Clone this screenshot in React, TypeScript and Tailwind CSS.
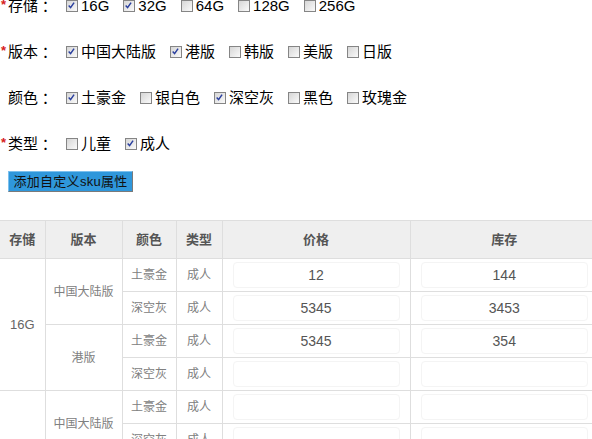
import React from "react";

type Opt = { label: string; checked: boolean };

const groups: { name: string; required: boolean; options: Opt[] }[] = [
  {
    name: "存储",
    required: true,
    options: [
      { label: "16G", checked: true },
      { label: "32G", checked: true },
      { label: "64G", checked: false },
      { label: "128G", checked: false },
      { label: "256G", checked: false },
    ],
  },
  {
    name: "版本",
    required: true,
    options: [
      { label: "中国大陆版", checked: true },
      { label: "港版", checked: true },
      { label: "韩版", checked: false },
      { label: "美版", checked: false },
      { label: "日版", checked: false },
    ],
  },
  {
    name: "颜色",
    required: false,
    options: [
      { label: "土豪金", checked: true },
      { label: "银白色", checked: false },
      { label: "深空灰", checked: true },
      { label: "黑色", checked: false },
      { label: "玫瑰金", checked: false },
    ],
  },
  {
    name: "类型",
    required: true,
    options: [
      { label: "儿童", checked: false },
      { label: "成人", checked: true },
    ],
  },
];

const skus = [
  { storage: "16G", version: "中国大陆版", color: "土豪金", type: "成人", price: "12", stock: "144" },
  { storage: "16G", version: "中国大陆版", color: "深空灰", type: "成人", price: "5345", stock: "3453" },
  { storage: "16G", version: "港版", color: "土豪金", type: "成人", price: "5345", stock: "354" },
  { storage: "16G", version: "港版", color: "深空灰", type: "成人", price: "", stock: "" },
  { storage: "32G", version: "中国大陆版", color: "土豪金", type: "成人", price: "", stock: "" },
  { storage: "32G", version: "中国大陆版", color: "深空灰", type: "成人", price: "", stock: "" },
  { storage: "32G", version: "港版", color: "土豪金", type: "成人", price: "", stock: "" },
  { storage: "32G", version: "港版", color: "深空灰", type: "成人", price: "", stock: "" },
];

function Check({ checked }: { checked: boolean }) {
  return (
    <span className="relative inline-block h-[12px] w-[12px] shrink-0 border border-[#858585] bg-gradient-to-br from-[#d6d6d6] to-[#fafafa]">
      {checked && (
        <svg viewBox="0 0 12 12" className="absolute inset-0 h-[10px] w-[10px]">
          <path d="M2 5.5 L4.3 8 L8.5 2" fill="none" stroke="#2a3f9e" strokeWidth="1.8" />
        </svg>
      )}
    </span>
  );
}

export default function App() {
  return (
    <div className="h-[439px] w-[592px] overflow-hidden bg-white font-['Liberation_Sans','Noto_Sans_CJK_SC',sans-serif]">
      {/* attribute pickers */}
      <div className="-mt-[5px] flex flex-col gap-[24px]">
        {groups.map((g) => (
          <div key={g.name} className="flex h-[22px] items-center text-[15px] text-black">
            <div className="flex w-[66px] shrink-0 items-center">
              <span className="w-[8px] self-start pl-[1px] pt-[3px] text-[13px] font-bold leading-none text-[#d62020]">
                {g.required ? "*" : ""}
              </span>
              <span>{g.name}</span>
              <span className="font-['Noto_Sans_CJK_TC',sans-serif]">：</span>
            </div>
            <div className="flex items-center gap-[14px]">
              {g.options.map((o) => (
                <label key={o.label} className="flex items-center gap-[3px]">
                  <Check checked={o.checked} />
                  <span>{o.label}</span>
                </label>
              ))}
            </div>
          </div>
        ))}
      </div>

      <button className="ml-[8px] mt-[16px] h-[21px] w-[125px] border border-t-[#7cc0ee] border-l-[#7cc0ee] border-r-[#7a7a7a] border-b-[#7a7a7a] bg-[#2f97db] text-[13px] leading-none tracking-[0.3px] text-[#111]">
        添加自定义sku属性
      </button>

      {/* sku table */}
      <table className="mt-[27px] w-[598px] table-fixed border-collapse text-center">
        <colgroup>
          <col className="w-[45px]" />
          <col className="w-[77px]" />
          <col className="w-[54px]" />
          <col className="w-[46px]" />
          <col className="w-[188px]" />
          <col className="w-[188px]" />
        </colgroup>
        <thead>
          <tr className="h-[38px] bg-[#efefef] text-[13px] font-bold text-[#555]">
            {["存储", "版本", "颜色", "类型", "价格", "库存"].map((h, i) => (
              <th
                key={h}
                className={`border-y border-[#dedede] ${i > 0 ? "border-l" : ""} font-bold`}
              >
                {h}
              </th>
            ))}
          </tr>
        </thead>
        <tbody className="text-[12px] text-[#808080]">
          {skus.map((s, i) => (
            <tr key={i} className="h-[33px]">
              {i % 4 === 0 && (
                <td rowSpan={4} className="border-b border-[#dedede] text-[13px] text-[#666]">
                  {s.storage}
                </td>
              )}
              {i % 2 === 0 && (
                <td rowSpan={2} className="border-b border-l border-[#dedede]">
                  {s.version}
                </td>
              )}
              <td className="border-b border-l border-[#dedede]">{s.color}</td>
              <td className="border-b border-l border-[#dedede]">{s.type}</td>
              <td className="border-b border-l border-[#dedede] px-[10px]">
                <input
                  readOnly
                  value={s.price}
                  className="h-[26px] w-full rounded-[4px] border border-[#f4f4f4] text-center text-[14px] text-[#555] outline-none"
                />
              </td>
              <td className="border-b border-l border-[#dedede] px-[10px]">
                <input
                  readOnly
                  value={s.stock}
                  className="h-[26px] w-full rounded-[4px] border border-[#f4f4f4] text-center text-[14px] text-[#555] outline-none"
                />
              </td>
            </tr>
          ))}
        </tbody>
      </table>
    </div>
  );
}
